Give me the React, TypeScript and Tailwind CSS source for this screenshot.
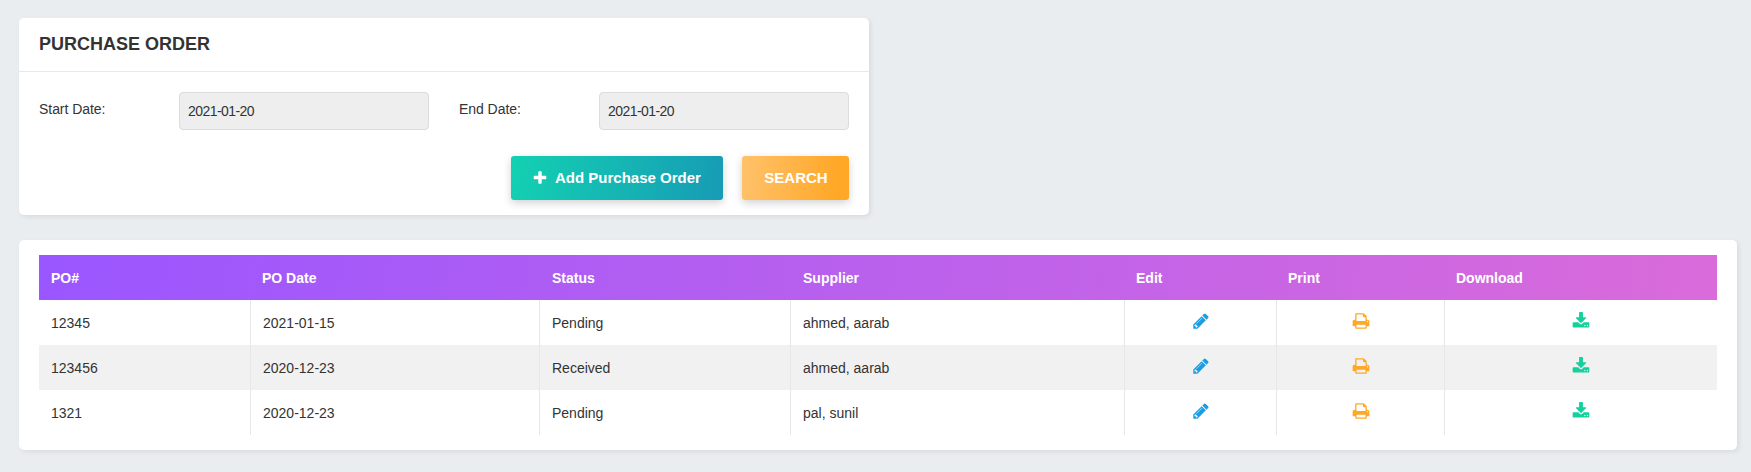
import React from "react";

const PENCIL =
  "M491 1536l91-91-235-235-91 91v107h128v128h107zm523-928q0-22-22-22-10 0-17 7l-542 542q-7 7-7 17 0 22 22 22 10 0 17-7l542-542q7-7 7-17zm-54-192l416 416-832 832h-416v-416zm683 96q0 53-37 90l-166 166-416-416 166-165q36-38 90-38 53 0 91 38l235 234q37 39 37 91z";
const PRINT =
  "M448 1536h896v-256h-896v256zm0-640h896v-384h-160q-40 0-68-28t-28-68v-160h-640v640zm1152 64q0-26-19-45t-45-19-45 19-19 45 19 45 45 19 45-19 19-45zm128 0v416q0 13-9.5 22.5t-22.5 9.5h-224v160q0 40-28 68t-68 28h-960q-40 0-68-28t-28-68v-160h-224q-13 0-22.5-9.5t-9.5-22.5v-416q0-79 56.5-135.5t135.5-56.5h64v-544q0-40 28-68t68-28h672q40 0 88 20t76 48l152 152q28 28 48 76t20 88v256h64q79 0 135.5 56.5t56.5 135.5z";
const DOWNLOAD =
  "M1344 1344q0-26-19-45t-45-19-45 19-19 45 19 45 45 19 45-19 19-45zm256 0q0-26-19-45t-45-19-45 19-19 45 19 45 45 19 45-19 19-45zm128-224v320q0 40-28 68t-68 28h-1472q-40 0-68-28t-28-68v-320q0-40 28-68t68-28h465l135 136q58 56 136 56t136-56l136-136h464q40 0 68 28t28 68zm-325-569q17 41-14 70l-448 448q-18 19-45 19t-45-19l-448-448q-31-29-14-70 17-39 59-39h256v-448q0-26 19-45t45-19h256q26 0 45 19t19 45v448h256q42 0 59 39z";
const PLUS =
  "M1600 736v192q0 40-28 68t-68 28h-416v416q0 40-28 68t-68 28h-192q-40 0-68-28t-28-68v-416h-416q-40 0-68-28t-28-68v-192q0-40 28-68t68-28h416v-416q0-40 28-68t68-28h192q40 0 68 28t28 68v416h416q40 0 68 28t28 68z";

function Icon({ path, className }: { path: string; className: string }) {
  return (
    <svg viewBox="0 0 1792 1792" fill="currentColor" className={className} aria-hidden="true">
      <path d={path} />
    </svg>
  );
}

function DateField({ label, value }: { label: string; value: string }) {
  return (
    <div className="flex w-[390px]">
      <span className="w-[140px] pt-[7px] leading-5 tracking-[-0.05px]">{label}</span>
      <div className="h-[38px] w-[250px] rounded-[4px] border border-[#dcdcdc] bg-[#eeeeee] px-2 leading-[36px] tracking-[-0.56px]">
        {value}
      </div>
    </div>
  );
}

const orders = [
  { po: "12345", date: "2021-01-15", status: "Pending", supplier: "ahmed, aarab" },
  { po: "123456", date: "2020-12-23", status: "Received", supplier: "ahmed, aarab" },
  { po: "1321", date: "2020-12-23", status: "Pending", supplier: "pal, sunil" },
];

const cell = "border-r border-[#e8e8e8] px-3 py-0";
const iconCell = "border-r border-[#e8e8e8] p-0 last:border-r-0";
const icon = "mx-auto -mt-[3px] block size-[18px]";

export default function App() {
  return (
    <div className="min-h-[472px] bg-[#e9edf0] pl-[19px] pt-[18px] font-['Liberation_Sans',Arial,sans-serif] text-sm text-[#333333]">
      <section className="h-[197px] w-[850px] rounded-[5px] bg-white shadow-[2px_2px_5px_rgba(0,0,0,0.07)]">
        <h1 className="h-[54px] border-b border-[#e8e8e8] px-5 text-lg font-bold leading-[52px]">
          PURCHASE ORDER
        </h1>
        <div className="flex justify-between px-5 pt-5">
          <DateField label="Start Date:" value="2021-01-20" />
          <DateField label="End Date:" value="2021-01-20" />
        </div>
        <div className="flex justify-end gap-[19px] px-5 pt-[26px] text-[15px] font-bold text-white">
          <button className="flex h-11 w-[212px] items-center rounded-[3px] bg-linear-[100deg,#13d1b2,#179bb5] pl-[21px] shadow-[0_3px_8px_rgba(0,0,0,0.18)]">
            <Icon path={PLUS} className="size-4" />
            <span className="ml-[7px]">Add Purchase Order</span>
          </button>
          <button className="h-11 w-[107px] rounded-[3px] bg-linear-[95deg,#ffc26b,#ffa726_90%] pl-px shadow-[0_3px_8px_rgba(0,0,0,0.18)]">
            SEARCH
          </button>
        </div>
      </section>

      <section className="mt-[25px] h-[210px] w-[1718px] rounded-[5px] bg-white px-5 pt-[15px] shadow-[2px_2px_5px_rgba(0,0,0,0.07)]">
        <table className="w-[1678px] table-fixed border-separate border-spacing-0 text-left">
          <colgroup>
            <col className="w-[212px]" />
            <col className="w-[289px]" />
            <col className="w-[251px]" />
            <col className="w-[334px]" />
            <col className="w-[152px]" />
            <col className="w-[168px]" />
            <col className="w-[272px]" />
          </colgroup>
          <thead>
            <tr className="h-[45px] bg-linear-[100deg,#9a56ff,#da6bda] text-white">
              {["PO#", "PO Date", "Status", "Supplier", "Edit", "Print", "Download"].map((h) => (
                <th
                  key={h}
                  className="py-0 pl-[11px] pr-3 font-bold first:pl-3 nth-3:pl-3 nth-4:pl-3"
                >
                  {h}
                </th>
              ))}
            </tr>
          </thead>
          <tbody>
            {orders.map((o) => (
              <tr key={o.po} className="h-[45px] even:bg-[#f1f1f1]">
                <td className={cell}>{o.po}</td>
                <td className={cell}>{o.date}</td>
                <td className={cell}>{o.status}</td>
                <td className={cell}>{o.supplier}</td>
                <td className={iconCell}>
                  <Icon path={PENCIL} className={`${icon} text-[#1b9de2]`} />
                </td>
                <td className={iconCell}>
                  <Icon path={PRINT} className={`${icon} text-[#ffa726]`} />
                </td>
                <td className={iconCell}>
                  <Icon path={DOWNLOAD} className={`${icon} text-[#13d19d]`} />
                </td>
              </tr>
            ))}
          </tbody>
        </table>
      </section>
    </div>
  );
}
